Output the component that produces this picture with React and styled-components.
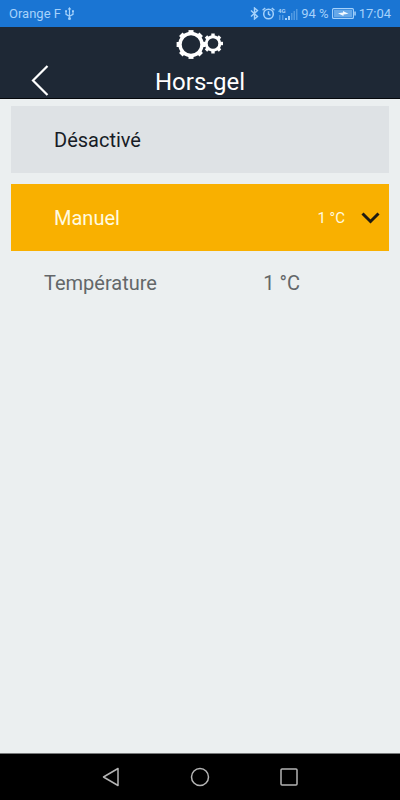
import React from 'react'
import styled, {createGlobalStyle} from 'styled-components'

const GlobalStyle = createGlobalStyle`
*{
    box-sizing:border-box;
}
body{
    margin:0;
    background:#ebeff0;
    font-family:Roboto, "Liberation Sans", sans-serif;
}
button{
    padding:0;
    border:0;
    background:none;
    font:inherit;
    text-align:left;
    cursor:pointer;
}
svg{
    display:block;
    flex:none;
}
`
const Screen = styled.div`
min-height:100vh;
display:flex;
flex-direction:column;
`
const StatusBar = styled.div`
height:27px;
padding:0 9px;
display:flex;
align-items:center;
justify-content:space-between;
background:#1a75d3;
color:#a6d2fb;
font-size:13px;
line-height:16px;
white-space:nowrap;
`
const StatusGroup = styled.div`
display:flex;
align-items:center;
gap:3px;
`
const Header = styled.header`
height:72px;
display:grid;
grid-template-columns:80px 1fr 80px;
background:#1e2835;
border-bottom:1px solid #05080c;
color:#fff;
`
const BackButton = styled.button`
display:flex;
align-items:flex-end;
padding:0 0 2px 31px;
`
const Heading = styled.div`
display:flex;
flex-direction:column;
align-items:center;
padding-top:2px;
h1{
    margin:8px 0 0;
    font-size:24px;
    line-height:30px;
    font-weight:400;
}
`
const Content = styled.main`
flex:1;
padding:7px 11px;
`
const Mode = styled.button`
width:100%;
height:67px;
margin-bottom:11px;
&&{
    padding:0 9px 0 43px;
    background:${({$active}) => $active ? '#f9b000' : '#dee2e5'};
}
display:flex;
align-items:center;
color:${({$active}) => $active ? '#fffbe0' : '#171c26'};
font-size:20px;
line-height:24px;
`
const ModeValue = styled.span`
margin-left:auto;
margin-right:16px;
font-size:15px;
`
const Setting = styled.dl`
margin:0;
padding:9px 16px 0 33px;
display:grid;
grid-template-columns:2fr 1fr;
color:#636769;
font-size:20px;
line-height:24px;
dd{
    margin:0;
}
`
const NavBar = styled.nav`
height:47px;
padding:0 67px;
display:grid;
grid-template-columns:repeat(3, 1fr);
background:#000;
border-top:1px solid #77797a;
button{
    display:flex;
    align-items:center;
    justify-content:center;
}
`

const UsbIcon = () => (
    <svg width="11" height="13" viewBox="0 0 11 13" fill="none" stroke="currentColor" strokeWidth="1.2">
        <path d="M5.5 1v10M2 5v2.3l3.5 1.9L9 7.3V4.5"/>
        <path d="M5.5 0l1.8 2.6H3.7zM1.1 3.2h1.9v1.9H1.1zM8 3.2h1.9v1.9H8z" fill="currentColor" stroke="none"/>
        <circle cx="5.5" cy="11.4" r="1.5" fill="currentColor" stroke="none"/>
    </svg>
)

const BluetoothIcon = () => (
    <svg width="9" height="13" viewBox="0 0 9 13" fill="none" stroke="currentColor" strokeWidth="1.4">
        <path d="M1 3.5l6.5 6L4.5 12V1l3 2.5-6.5 6"/>
    </svg>
)

const AlarmIcon = () => (
    <svg width="13" height="13" viewBox="0 0 13 13" fill="none" stroke="currentColor" strokeWidth="1.5">
        <circle cx="6.5" cy="7" r="4.8"/>
        <path d="M6.5 4.3V7.2l2 1.2M.6 3.2L3.2 1M12.4 3.2L9.8 1"/>
    </svg>
)

const SignalIcon = () => (
    <svg width="20" height="14" viewBox="0 0 20 14" fill="currentColor">
        <text x="0" y="6" fontSize="6" fontWeight="700">4G</text>
        <path d="M7 11h2v2H7zM10 9h2v4h-2z"/>
        <path d="M1 8h1.5v5H1zM4 8h1.5v5H4zM13 6h1.5v7H13zM15.5 4H17v9h-1.5zM18 2h1.5v11H18z" opacity=".4"/>
    </svg>
)

const BatteryIcon = () => (
    <svg width="24" height="11" viewBox="0 0 24 11" fill="none">
        <rect x=".6" y=".6" width="20.8" height="9.8" rx="1" stroke="currentColor" strokeWidth="1.1"/>
        <rect x="2" y="2" width="18" height="7" fill="currentColor" opacity=".55"/>
        <path d="M22.3 3.5h1.5v4h-1.5z" fill="currentColor"/>
        <path d="M6 5.2l5-.7V3l5.5 2.8-5 .6v1.7z" fill="#f2f9ff"/>
    </svg>
)

const Gear = ({cx, cy, r, ring, tooth}) => (
    <g transform={`translate(${cx} ${cy})`}>
        <circle r={r} fill="none" stroke="currentColor" strokeWidth={ring}/>
        {[0, 45, 90, 135, 180, 225, 270, 315].map(angle => (
            <rect
                key={angle}
                x={-tooth / 2}
                y={-r - ring / 2 - 1.7}
                width={tooth}
                height="3"
                fill="currentColor"
                transform={`rotate(${angle})`}
            />
        ))}
    </g>
)

const GearsIcon = () => (
    <svg width="48" height="30" viewBox="0 0 48 30">
        <Gear cx={15} cy={15.5} r={11} ring={3.4} tooth={5}/>
        <Gear cx={37} cy={14.5} r={6.8} ring={3} tooth={3.4}/>
    </svg>
)

const ModeRow = ({label, value, active}) => (
    <Mode type="button" $active={active} aria-expanded={active}>
        {label}
        {value && <ModeValue>{value}</ModeValue>}
        {active && (
            <svg width="19" height="12" viewBox="0 0 19 12" fill="none" stroke="#1f1b12" strokeWidth="3">
                <path d="M1.5 1.5l8 8 8-8"/>
            </svg>
        )}
    </Mode>
)

const App = () => {
    return (
        <Screen>
            <GlobalStyle/>
            <StatusBar>
                <StatusGroup>Orange F <UsbIcon/></StatusGroup>
                <StatusGroup>
                    <BluetoothIcon/>
                    <AlarmIcon/>
                    <SignalIcon/>
                    <span>94 %</span>
                    <BatteryIcon/>
                    <span>17:04</span>
                </StatusGroup>
            </StatusBar>
            <Header>
                <BackButton type="button" aria-label="Retour">
                    <svg width="18" height="31" viewBox="0 0 18 31" fill="none" stroke="#fff" strokeWidth="2.2">
                        <path d="M16.5 1L2 15.5 16.5 30"/>
                    </svg>
                </BackButton>
                <Heading>
                    <GearsIcon/>
                    <h1>Hors-gel</h1>
                </Heading>
            </Header>
            <Content>
                <ModeRow label="Désactivé"/>
                <ModeRow label="Manuel" value="1 °C" active/>
                <Setting>
                    <dt>Température</dt>
                    <dd>1 °C</dd>
                </Setting>
            </Content>
            <NavBar>
                <button type="button" aria-label="Précédent">
                    <svg width="18" height="20" viewBox="0 0 18 20" fill="none" stroke="#b4b4b4" strokeWidth="1.5" strokeLinejoin="round">
                        <path d="M16 1.5v17L1.5 10z"/>
                    </svg>
                </button>
                <button type="button" aria-label="Accueil">
                    <svg width="20" height="20" viewBox="0 0 20 20" fill="none" stroke="#b4b4b4" strokeWidth="1.5">
                        <circle cx="10" cy="10" r="8.5"/>
                    </svg>
                </button>
                <button type="button" aria-label="Applications récentes">
                    <svg width="18" height="18" viewBox="0 0 18 18" fill="none" stroke="#b4b4b4" strokeWidth="1.5">
                        <rect x="1" y="1" width="16" height="16" rx="1"/>
                    </svg>
                </button>
            </NavBar>
        </Screen>
    )
}

export default App
